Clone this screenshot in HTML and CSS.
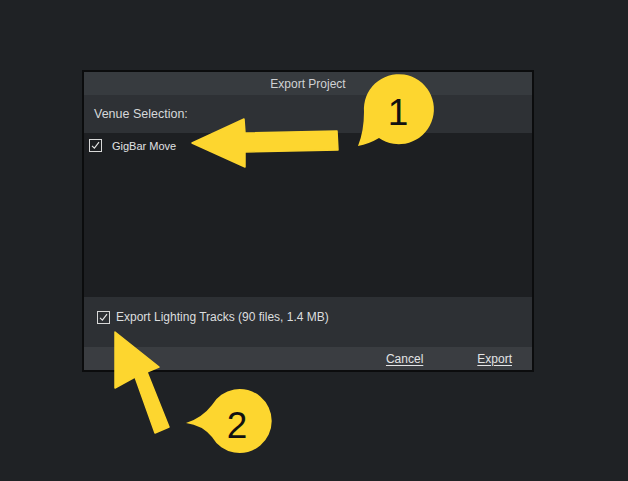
FILE: index.html
```html
<!DOCTYPE html>
<html>
<head>
<meta charset="utf-8">
<link rel="stylesheet" href="styles.css">
</head>
<body>
<div class="dialog">
  <div class="titlebar">Export Project</div>
  <div class="venue-head">Venue Selection:</div>
  <div class="list">
    <div class="item">
      <svg class="cb" width="13" height="13" viewBox="0 0 13 13"><rect x="0.5" y="0.5" width="12" height="12" fill="none" stroke="#d8d8d8"/><path d="M3 6.8 L5.4 9.2 L10 3.2" fill="none" stroke="#e8e8e8" stroke-width="1.1"/></svg>
      <span>GigBar Move</span>
    </div>
  </div>
  <div class="export-sec">
    <svg class="cb" width="13" height="13" viewBox="0 0 13 13"><rect x="0.5" y="0.5" width="12" height="12" fill="none" stroke="#d8d8d8"/><path d="M3 6.8 L5.4 9.2 L10 3.2" fill="none" stroke="#e8e8e8" stroke-width="1.1"/></svg>
    <span>Export Lighting Tracks (90 files, 1.4 MB)</span>
  </div>
  <div class="footer">
    <span class="btn">Cancel</span>
    <span class="btn">Export</span>
  </div>
</div>
<svg class="overlay" width="628" height="481" viewBox="0 0 628 481">
  <path d="M192 143 L244 119 L245 133 L337 131 L338 150 L245 152 L245 167 Z" fill="#fdd62f" stroke="#fdd62f" stroke-width="1.5" stroke-linejoin="round"/>
  <path d="M364 112 A35 35 0 1 1 379 138 Q369 144 358 146 Q364 131 364 112 Z" fill="#fdd62f"/>
  <text x="398" y="125" class="num">1</text>
  <path d="M115 332 L159 367 L147 372 L169 427 L155 433 L135 377 L115 388 Z" fill="#fdd62f" stroke="#fdd62f" stroke-width="1.5" stroke-linejoin="round"/>
  <path d="M212 405 A32 32 0 1 1 212 437 Q202 425 186 423 Q202 418 212 405 Z" fill="#fdd62f"/>
  <text x="237" y="438" class="num">2</text>
</svg>
</body>
</html>
```
FILE: styles.css
```css
html, body {
  margin: 0;
  padding: 0;
}
body {
  background: #1f2225;
  width: 628px;
  height: 481px;
  overflow: hidden;
  position: relative;
  font-family: "Liberation Sans", Arial, sans-serif;
  padding-top: 70px;
  padding-left: 82px;
  box-sizing: border-box;
}
.dialog {
  width: 448px;
  border: 2px solid #0b0c0d;
  display: flex;
  flex-direction: column;
  background: #1d1f22;
}
.titlebar {
  height: 23px;
  background: #373b3f;
  color: #d0d2d4;
  font-size: 12px;
  display: flex;
  align-items: center;
  justify-content: center;
}
.venue-head {
  height: 38px;
  background: #2e3135;
  color: #d6d8da;
  font-size: 12.5px;
  display: flex;
  align-items: center;
  padding-left: 10px;
}
.list {
  height: 164px;
  background: #1d1f22;
}
.item {
  display: flex;
  align-items: center;
  gap: 10px;
  padding: 6px 0 0 5px;
  color: #e0e2e4;
  font-size: 11px;
}
.export-sec {
  height: 50px;
  box-sizing: border-box;
  background: #2d3034;
  display: flex;
  align-items: center;
  align-self: stretch;
  padding: 14px 0 0 13px;
  align-items: flex-start;
  gap: 6px;
  color: #dcdedf;
  font-size: 12px;
  line-height: 13px;
}
.footer {
  height: 23px;
  background: #3a3d41;
  display: flex;
  align-items: center;
  justify-content: flex-end;
  padding-right: 20px;
  gap: 54px;
}
.btn {
  color: #e2e4e6;
  font-size: 12px;
  text-decoration: underline;
  text-underline-offset: 2px;
}
.cb {
  display: block;
  flex: none;
}
.overlay {
  position: absolute;
  left: 0;
  top: 0;
}
.num {
  font-family: "Liberation Sans", Arial, sans-serif;
  font-size: 37px;
  fill: #111;
  text-anchor: middle;
}
```
